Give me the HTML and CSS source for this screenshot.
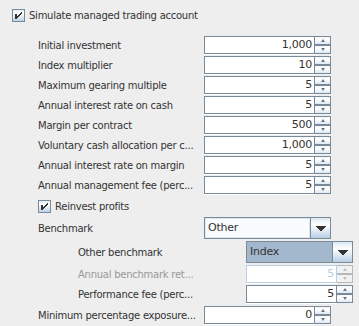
FILE: index.html
```html
<!DOCTYPE html>
<html>
<head>
<meta charset="utf-8">
<link rel="stylesheet" href="styles.css">
</head>
<body>
<div class="panel">
  <div class="check top">
    <svg class="cbox" width="13" height="13" viewBox="0 0 13 13" shape-rendering="crispEdges"><defs><linearGradient id="g1" x1="0" y1="0" x2="0" y2="1"><stop offset="0" stop-color="#DDE8F3"/><stop offset="0.3" stop-color="#ffffff"/><stop offset="1" stop-color="#B8CFE5"/></linearGradient></defs><rect x="0.5" y="0.5" width="12" height="12" fill="url(#g1)" stroke="#7A8A99"/><path d="M3 5h2v5H3z M5 7h1v2H5z M6 6h1v2H6z M7 5h1v2H7z M8 4h1v2H8z M9 3h1v2H9z" fill="#333"/></svg>
    <span>Simulate managed trading account</span>
  </div>

  <div class="rows">
    <div class="row"><span class="lbl">Initial investment</span>
      <div class="spinner"><div class="sp-field">1,000</div><div class="sp-btns"><div class="sp-btn"><span class="up"></span></div><div class="sp-btn"><span class="down"></span></div></div></div></div>
    <div class="row"><span class="lbl">Index multiplier</span>
      <div class="spinner"><div class="sp-field">10</div><div class="sp-btns"><div class="sp-btn"><span class="up"></span></div><div class="sp-btn"><span class="down"></span></div></div></div></div>
    <div class="row"><span class="lbl">Maximum gearing multiple</span>
      <div class="spinner"><div class="sp-field">5</div><div class="sp-btns"><div class="sp-btn"><span class="up"></span></div><div class="sp-btn"><span class="down"></span></div></div></div></div>
    <div class="row"><span class="lbl">Annual interest rate on cash</span>
      <div class="spinner"><div class="sp-field">5</div><div class="sp-btns"><div class="sp-btn"><span class="up"></span></div><div class="sp-btn"><span class="down"></span></div></div></div></div>
    <div class="row"><span class="lbl">Margin per contract</span>
      <div class="spinner"><div class="sp-field">500</div><div class="sp-btns"><div class="sp-btn"><span class="up"></span></div><div class="sp-btn"><span class="down"></span></div></div></div></div>
    <div class="row"><span class="lbl">Voluntary cash allocation per c...</span>
      <div class="spinner"><div class="sp-field">1,000</div><div class="sp-btns"><div class="sp-btn"><span class="up"></span></div><div class="sp-btn"><span class="down"></span></div></div></div></div>
    <div class="row"><span class="lbl">Annual interest rate on margin</span>
      <div class="spinner"><div class="sp-field">5</div><div class="sp-btns"><div class="sp-btn"><span class="up"></span></div><div class="sp-btn"><span class="down"></span></div></div></div></div>
    <div class="row"><span class="lbl">Annual management fee (perc...</span>
      <div class="spinner"><div class="sp-field">5</div><div class="sp-btns"><div class="sp-btn"><span class="up"></span></div><div class="sp-btn"><span class="down"></span></div></div></div></div>
  </div>

  <div class="check reinvest">
    <svg class="cbox" width="13" height="13" viewBox="0 0 13 13" shape-rendering="crispEdges"><defs><linearGradient id="g2" x1="0" y1="0" x2="0" y2="1"><stop offset="0" stop-color="#DDE8F3"/><stop offset="0.3" stop-color="#ffffff"/><stop offset="1" stop-color="#B8CFE5"/></linearGradient></defs><rect x="0.5" y="0.5" width="12" height="12" fill="url(#g2)" stroke="#7A8A99"/><path d="M3 5h2v5H3z M5 7h1v2H5z M6 6h1v2H6z M7 5h1v2H7z M8 4h1v2H8z M9 3h1v2H9z" fill="#333"/></svg>
    <span>Reinvest profits</span>
  </div>

  <div class="row combo-row"><span class="lbl">Benchmark</span>
    <div class="combo"><div class="cb-text">Other</div><div class="cb-btn"><svg width="10" height="5" viewBox="0 0 10 5" shape-rendering="crispEdges"><path d="M0 0h10v1H0z M1 1h8v1H1z M2 2h6v1H2z M3 3h4v1H3z M4 4h2v1H4z" fill="#333"/></svg></div></div>
  </div>

  <div class="row sub combo-row2"><span class="lbl">Other benchmark</span>
    <div class="combo focus"><div class="cb-text">Index</div><div class="cb-btn"><svg width="10" height="5" viewBox="0 0 10 5" shape-rendering="crispEdges"><path d="M0 0h10v1H0z M1 1h8v1H1z M2 2h6v1H2z M3 3h4v1H3z M4 4h2v1H4z" fill="#333"/></svg></div></div>
  </div>

  <div class="row sub sp-row"><span class="lbl dis">Annual benchmark ret...</span>
    <div class="spinner disabled"><div class="sp-field">5</div><div class="sp-btns"><div class="sp-btn"><span class="up"></span></div><div class="sp-btn"><span class="down"></span></div></div></div></div>

  <div class="row sub sp-row"><span class="lbl">Performance fee (perc...</span>
    <div class="spinner"><div class="sp-field">5</div><div class="sp-btns"><div class="sp-btn"><span class="up"></span></div><div class="sp-btn"><span class="down"></span></div></div></div></div>

  <div class="row last"><span class="lbl">Minimum percentage exposure...</span>
    <div class="spinner"><div class="sp-field">0</div><div class="sp-btns"><div class="sp-btn"><span class="up"></span></div><div class="sp-btn"><span class="down"></span></div></div></div></div>
</div>
</body>
</html>
```

FILE: styles.css
```css
html, body {
  margin: 0;
  padding: 0;
  background: #EEEEEE;
}
body {
  width: 359px;
  height: 326px;
  overflow: hidden;
  font-family: "DejaVu Sans", "Liberation Sans", sans-serif;
  font-size: 10px;
  letter-spacing: -0.25px;
  color: #333333;
}
.panel {
  display: flex;
  flex-direction: column;
}
.check {
  display: flex;
  align-items: center;
  gap: 4px;
  height: 13px;
  white-space: nowrap;
}
.cbox { display: block; flex: none; }
.top { margin: 9px 0 0 12px; }
.rows {
  display: flex;
  flex-direction: column;
  gap: 2px;
  margin-top: 14px;
}
.row {
  display: flex;
  align-items: center;
  padding-left: 38px;
  height: 18px;
}
.lbl {
  width: 166px;
  flex: none;
  white-space: nowrap;
  overflow: hidden;
}
.lbl.dis { color: #999999; }
.row.sub { padding-left: 78px; }
.row.sub .lbl { width: 168px; }

.spinner {
  display: flex;
  width: 127px;
  height: 18px;
  flex: none;
}
.row.sub .spinner { width: 107px; }
.sp-field {
  flex: 1;
  box-sizing: border-box;
  border: 1px solid #7A8A99;
  box-shadow: 0 1px 0 #ffffff;
  background: #ffffff;
  text-align: right;
  padding-right: 2px;
  line-height: 16px;
  font-size: 11px;
  color: #333;
}
.sp-btns {
  width: 16px;
  flex: none;
  display: flex;
  flex-direction: column;
}
.sp-btn {
  flex: 1;
  box-sizing: border-box;
  border: 1px solid #7A8A99;
  border-left: 0;
  background: linear-gradient(#F4F7FB, #ffffff 40%, #DDE8F3);
  display: flex;
  align-items: center;
  justify-content: center;
}
.up, .down {
  width: 0;
  height: 0;
  border-left: 2.5px solid transparent;
  border-right: 2.5px solid transparent;
}
.up { border-bottom: 3px solid #6B7580; }
.down { border-top: 3px solid #6B7580; }

.spinner.disabled .sp-field {
  border-color: #B8CFE5;
  color: #B8CFE5;
}
.spinner.disabled .sp-btn {
  border-color: #B8B8B8;
  background: #F2F2F2;
}
.spinner.disabled .up { border-bottom-color: #C0C0C0; }
.spinner.disabled .down { border-top-color: #C0C0C0; }

.reinvest { margin: 6px 0 0 38px; }

.combo-row { height: 22px; margin-top: 4px; }
.combo-row2 { height: 22px; margin-top: 2px; }
.sp-row { margin-top: 2px; }
.last { margin-top: 3px; }

.combo {
  display: flex;
  width: 127px;
  height: 22px;
  box-sizing: border-box;
  border: 1px solid #7A8A99;
  flex: none;
}
.row.sub .combo { width: 107px; }
.cb-text {
  flex: 1;
  background: #FAFBFD;
  box-shadow: inset 0 0 0 1px #DDE8F3;
  padding-left: 3px;
  line-height: 20px;
  font-size: 11px;
}
.combo.focus .cb-text {
  background: #A3B8CC;
  box-shadow: none;
}
.cb-btn {
  width: 19px;
  flex: none;
  border-left: 1px solid #7A8A99;
  background: linear-gradient(#DDE8F3, #ffffff 35%, #B8CFE5);
  display: flex;
  align-items: center;
  justify-content: center;
}
.cb-btn svg { display: block; }
```
